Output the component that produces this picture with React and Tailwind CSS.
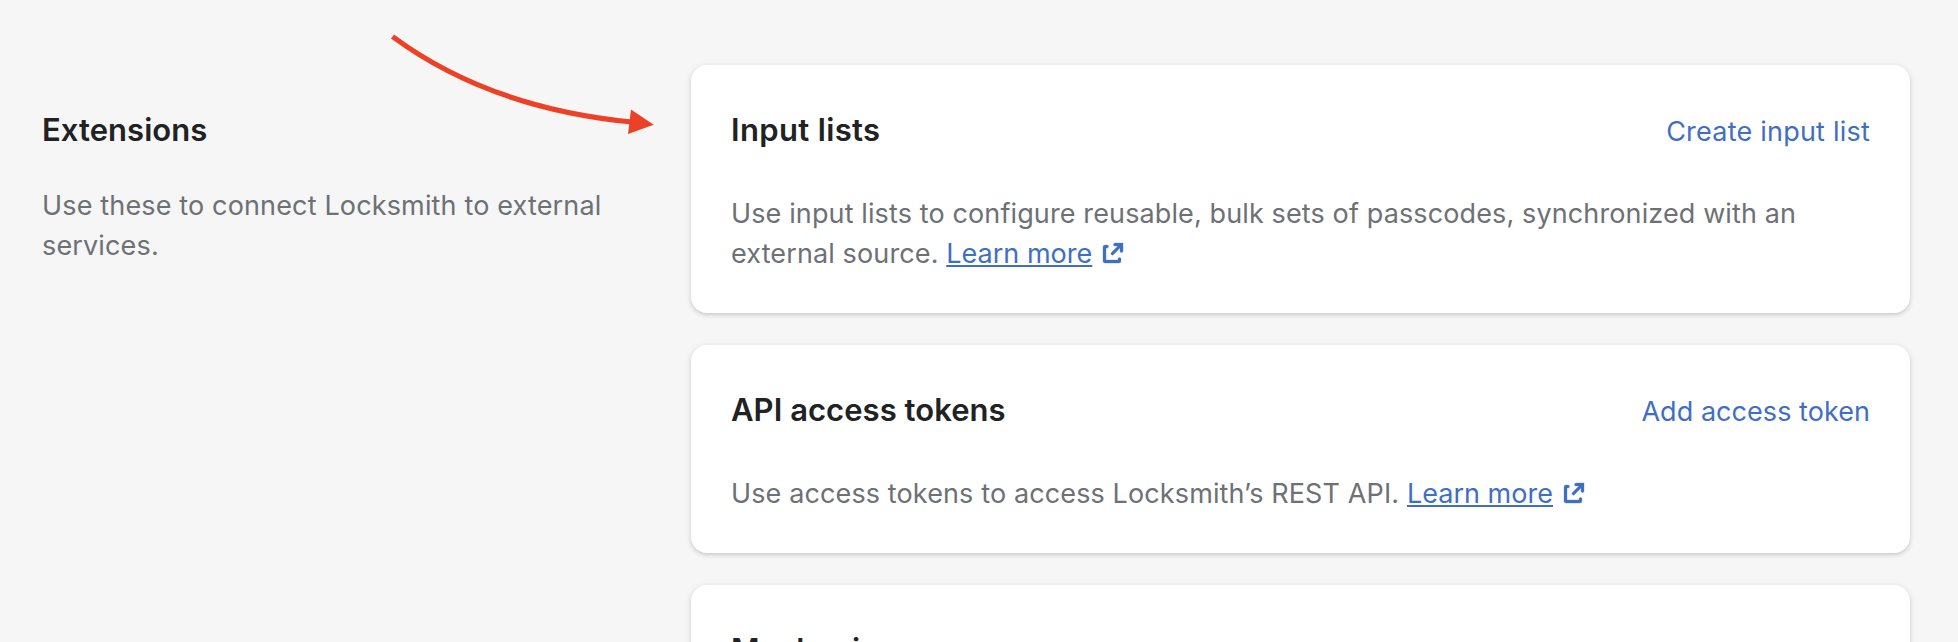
function ExternalIcon() {
  return (
    <svg viewBox="0 0 20 20" fill="currentColor" stroke="currentColor" strokeWidth="0.15" className="-my-2 ml-px inline-block size-10 align-[-2px]" aria-hidden="true">
      <path d="M14 13v1a1 1 0 0 1-1 1H6c-.575 0-1-.484-1-1V7a1 1 0 0 1 1-1h1c1.037 0 1.04 1.5 0 1.5-.178.005-.353 0-.5 0v6h6V13c0-1 1.5-1 1.5 0zm-3.75-7.25A.75.75 0 0 1 11 5h4v4a.75.75 0 0 1-1.5 0V7.56l-3.22 3.22a.75.75 0 1 1-1.06-1.06l3.22-3.22H11a.75.75 0 0 1-.75-.75z" />
    </svg>
  );
}

function LearnMore() {
  return (
    <a href="#" className="whitespace-nowrap text-[#3f6ec7]">
      <span className="tracking-[0.02px] underline decoration-2 underline-offset-2">Learn more</span>
      <ExternalIcon />
    </a>
  );
}

function Card({ title, action, titleTracking = "tracking-[0.05px]", actionTracking = "tracking-[0.05px]", children }) {
  return (
    <section className="rounded-2xl bg-white px-10 pt-[41px] pb-[39px] shadow-[0_0_10px_rgba(23,24,24,0.05),0_2px_4px_rgba(0,0,0,0.15)]">
      <div className="flex items-baseline justify-between">
        <h2 className={`text-[31px] leading-[48px] font-semibold text-[#202223] ${titleTracking}`}>{title}</h2>
        {action && <a href="#" className={`text-[27px] leading-10 text-[#3f6ec7] ${actionTracking}`}>{action}</a>}
      </div>
      <p className="mt-10 text-[27px] leading-10 tracking-[0.12px] text-[#6d7175]">{children}</p>
    </section>
  );
}

export default function App() {
  return (
    <main className="relative flex h-[642px] w-[1958px] overflow-hidden bg-[#f6f6f6] pl-[42px] font-['Inter',sans-serif]">
      <div className="w-[649px] shrink-0 pt-[106px]">
        <h2 className="text-[31px] leading-[48px] font-semibold tracking-[0.05px] text-[#202223]">Extensions</h2>
        <p className="mt-8 w-[580px] text-[27px] leading-10 tracking-[0.15px] text-[#6d7175]">
          Use these to connect Locksmith to external services.
        </p>
      </div>
      <div className="flex w-[1219px] shrink-0 flex-col gap-8 pt-[65px]">
        <Card title="Input lists" action="Create input list" titleTracking="tracking-[0.35px]" actionTracking="tracking-[0.22px]">
          Use input lists to configure reusable, bulk sets of passcodes, synchronized with an<br />
          external source. <LearnMore />
        </Card>
        <Card title="API access tokens" action="Add access token">
          Use access tokens to access Locksmith’s REST API. <LearnMore />
        </Card>
        <Card title="Mechanic" />
      </div>
      <svg viewBox="0 0 300 130" className="pointer-events-none absolute top-5 left-[380px] h-[130px] w-[300px]" aria-hidden="true">
        <path d="M12.5 16.5C74 62 155 92.5 252 102" fill="none" stroke="#ec4126" strokeWidth="5.2" />
        <path d="M251 89.5L273.7 104.7L248 114Z" fill="#ec4126" />
      </svg>
    </main>
  );
}
